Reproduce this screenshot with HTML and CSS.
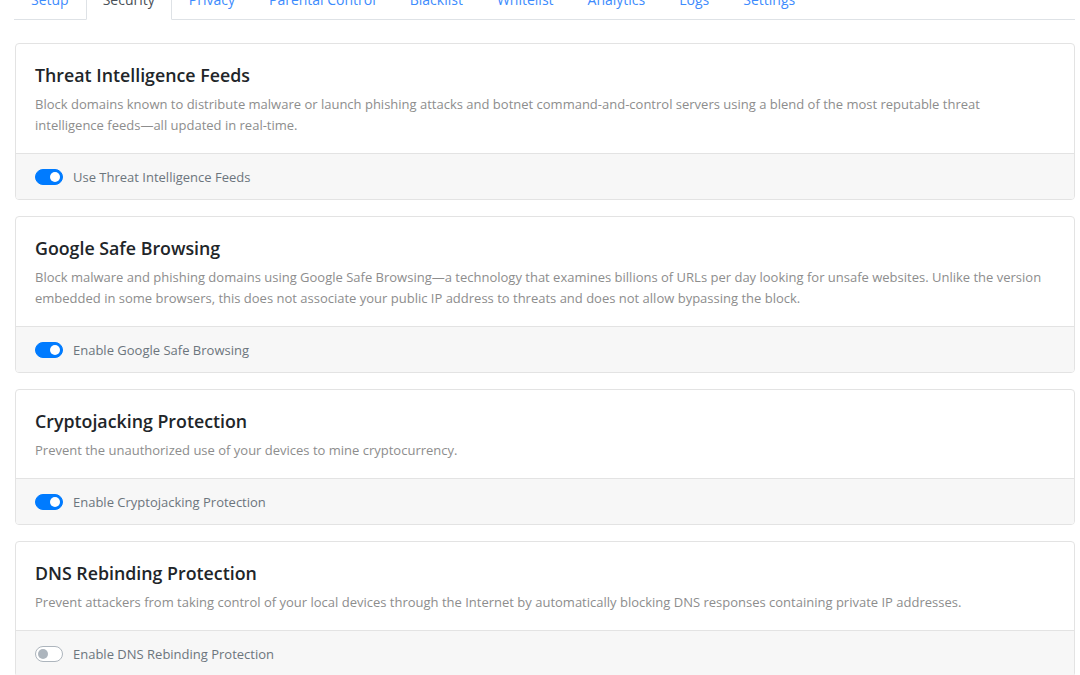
FILE: index.html
```html
<!DOCTYPE html>
<html lang="en">
  <head>
    <meta charset="UTF-8" />
    <title>Security</title>
    <link rel="stylesheet" href="styles.css">
  </head>
  <body>
    <div class="page">
      <ul class="tabs">
        <li><a href="#">Setup</a></li>
        <li class="active"><a href="#">Security</a></li>
        <li><a href="#">Privacy</a></li>
        <li><a href="#">Parental Control</a></li>
        <li><a href="#">Blacklist</a></li>
        <li><a href="#">Whitelist</a></li>
        <li><a href="#">Analytics</a></li>
        <li><a href="#">Logs</a></li>
        <li><a href="#">Settings</a></li>
      </ul>

      <div class="card">
        <div class="card-body">
          <h5>Threat Intelligence Feeds</h5>
          <p>Block domains known to distribute malware or launch phishing attacks and botnet command-and-control servers using a blend of the most reputable threat intelligence feeds—all updated in real-time.</p>
        </div>
        <div class="card-footer">
          <label class="switch"><input type="checkbox" checked /><span class="slider"></span>Use Threat Intelligence Feeds</label>
        </div>
      </div>

      <div class="card">
        <div class="card-body">
          <h5>Google Safe Browsing</h5>
          <p>Block malware and phishing domains using Google Safe Browsing—a technology that examines billions of URLs per day looking for unsafe websites. Unlike the version embedded in some browsers, this does not associate your public IP address to threats and does not allow bypassing the block.</p>
        </div>
        <div class="card-footer">
          <label class="switch"><input type="checkbox" checked /><span class="slider"></span>Enable Google Safe Browsing</label>
        </div>
      </div>

      <div class="card">
        <div class="card-body">
          <h5>Cryptojacking Protection</h5>
          <p>Prevent the unauthorized use of your devices to mine cryptocurrency.</p>
        </div>
        <div class="card-footer">
          <label class="switch"><input type="checkbox" checked /><span class="slider"></span>Enable Cryptojacking Protection</label>
        </div>
      </div>

      <div class="card">
        <div class="card-body">
          <h5>DNS Rebinding Protection</h5>
          <p>Prevent attackers from taking control of your local devices through the Internet by automatically blocking DNS responses containing private IP addresses.</p>
        </div>
        <div class="card-footer">
          <label class="switch"><input type="checkbox" /><span class="slider"></span>Enable DNS Rebinding Protection</label>
        </div>
      </div>
    </div>
  </body>
</html>
```

FILE: styles.css
```css
body {
  margin: 0;
  background: #fff;
  color: #212529;
  font-family: "Open Sans", sans-serif;
  overflow: hidden;
}
.page {
  padding: 0 5px 0 15px;
  margin-top: -21px;
}

/* Tabs */
.tabs {
  display: flex;
  margin: 0 0 23px -1px;
  padding: 0;
  list-style: none;
  border-bottom: 1px solid #dee2e6;
}
.tabs li {
  margin-bottom: -1px;
}
.tabs a {
  display: block;
  padding: 8px 16px;
  line-height: 23px;
  font-size: 14px;
  color: #3d8bfd;
  text-decoration: none;
  border: 1px solid transparent;
  border-radius: 4px 4px 0 0;
}
.tabs .active a {
  color: #495057;
  background: #fff;
  border-color: #dee2e6 #dee2e6 #fff;
}

/* Cards */
.card {
  border: 1px solid #e3e3e3;
  border-radius: 4px;
  margin-bottom: 16px;
  overflow: hidden;
}
.card-body {
  padding: 19px 22px 17px 19px;
}
.card h5 {
  margin: 0 0 7px;
  font-size: 17.8px;
  font-weight: 600;
  line-height: 24px;
  color: #212529;
}
.card p {
  margin: 0;
  font-size: 13px;
  line-height: 21px;
  color: #8d8d8d;
}
.card-footer {
  background: #f7f7f7;
  border-top: 1px solid #e3e3e3;
  padding: 12px 19px 11px;
}

/* Switch */
.switch {
  display: flex;
  align-items: center;
  height: 22px;
  font-size: 13px;
  color: #6c757d;
}
.switch input {
  display: none;
}
.slider {
  position: relative;
  width: 26px;
  height: 14px;
  margin-right: 10px;
  border: 1px solid #adb5bd;
  border-radius: 8px;
  background: #fff;
}
.slider::after {
  content: "";
  position: absolute;
  top: 2px;
  left: 2px;
  width: 10px;
  height: 10px;
  border-radius: 50%;
  background: #adb5bd;
}
.switch input:checked + .slider {
  background: #007bff;
  border-color: #007bff;
}
.switch input:checked + .slider::after {
  left: 14px;
  background: #fff;
}
```
